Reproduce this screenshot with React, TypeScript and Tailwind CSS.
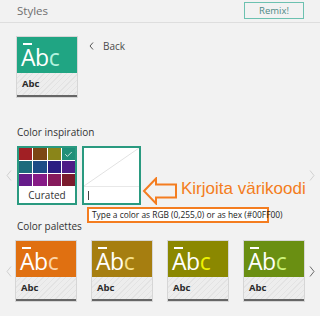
import { Check } from "lucide-react";

const swatches = [
	"bg-[#a11f24]",
	"bg-[#7c4614]",
	"bg-[#8a8519]",
	"bg-[#1f8f78]",
	"bg-[#1d6b7c]",
	"bg-[#1c4b86]",
	"bg-[#2b1d82]",
	"bg-[#4d1c86]",
	"bg-[#661c8a]",
	"bg-[#861a86]",
	"bg-[#861a5c]",
	"bg-[#7a1a2c]",
];

const palettes = [
	{ bg: "bg-[#e07011]", accent: "text-[#fbd4a8]" },
	{ bg: "bg-[#a67e10]", accent: "text-[#f6e08a]" },
	{ bg: "bg-[#8b8800]", accent: "text-[#eef200]" },
	{ bg: "bg-[#6a8f12]", accent: "text-[#cdf27a]" },
];

function StyleCard({ bg, accent }: { bg: string; accent: string }) {
	return (
		<div className="w-[60px] h-[60px] flex flex-col shrink-0 shadow-[0_0_0_1px_#d6d6d6]">
			<div className={`h-[36px] relative overflow-hidden ${bg}`}>
				<div className="absolute left-[6px] top-[6px] w-[9px] h-[1.5px] bg-white" />
				<div className="absolute left-[4px] top-[9px] text-[23px] leading-none text-white tracking-[-0.5px]">
					Ab<span className={accent}>c</span>
				</div>
			</div>
			<div className="flex-1 flex items-center pl-[5px] bg-[repeating-linear-gradient(135deg,#ededed_0px,#ededed_3px,#e3e3e3_3px,#e3e3e3_4px)]">
				<span className="text-[9.5px] font-bold text-[#2a2a2a] leading-none">Abc</span>
			</div>
			<div className="h-[2px] bg-[#666]" />
		</div>
	);
}

function Chevron({ dir, dark }: { dir: "left" | "right"; dark?: boolean }) {
	return (
		<svg width="6" height="11" viewBox="0 0 6 11" className="shrink-0">
			<polyline
				points={dir === "left" ? "5,0.5 1,5.5 5,10.5" : "1,0.5 5,5.5 1,10.5"}
				fill="none"
				stroke={dark ? "#6a6a6a" : "#d0d0d0"}
				strokeWidth="1"
			/>
		</svg>
	);
}

export default function App() {
	return (
		<div className="w-[320px] h-[316px] bg-[#f2f2f2] relative overflow-hidden font-['Open_Sans',sans-serif]">
			<div className="h-[23px] border-b border-[#dedede] flex items-center justify-between pl-[17px] pr-[16px]">
				<span className="text-[11.5px] text-[#6f6f6f]">Styles</span>
				<button className="w-[60px] h-[17px] border-[1.5px] border-[#6cc1b0] text-[9.5px] text-[#4f8a86] leading-none mt-[-1px]">
					Remix!
				</button>
			</div>

			<div className="flex pt-[14px] pl-[17px]">
				<StyleCard bg="bg-[#20a583]" accent="text-[#b4f2df]" />
				<div className="flex items-center gap-[9px] ml-[12px] h-[16px] mt-[1px]">
					<svg width="5" height="8" viewBox="0 0 5 8">
						<polyline points="4,0.5 1,4 4,7.5" fill="none" stroke="#555" strokeWidth="1" />
					</svg>
					<span className="text-[10px] text-[#4a4a4a]">Back</span>
				</div>
			</div>

			<div className="mt-[28px] pl-[17px] text-[10px] text-[#333] leading-[14px]">Color inspiration</div>

			<div className="flex items-center mt-[7px]">
				<div className="w-[17px] flex justify-center pl-[1px]">
					<Chevron dir="left" />
				</div>
				<div className="flex gap-[5px]">
					<div className="w-[60px] h-[59px] border-2 border-[#2a9a80] flex flex-col bg-white">
						<div className="grid grid-cols-4 gap-px bg-white">
							{swatches.map((c, i) => (
								<div key={i} className={`h-[12px] flex items-center justify-center ${c}`}>
									{i === 3 && <Check size={9} color="white" strokeWidth={2} />}
								</div>
							))}
						</div>
						<div className="flex-1 flex items-center justify-center text-[10px] text-[#333] leading-none">
							Curated
						</div>
					</div>
					<div className="w-[59px] h-[59px] border-2 border-[#2a9a80] flex flex-col bg-white">
						<svg width="55" height="38" viewBox="0 0 55 38" className="block">
							<line x1="0" y1="38" x2="55" y2="0" stroke="#e2e2e2" strokeWidth="1" />
						</svg>
						<div className="h-px bg-[#e8e8e8]" />
						<div className="flex-1 flex items-center pl-[4px]">
							<div className="w-px h-[9px] bg-[#444]" />
						</div>
					</div>
				</div>
				<div className="flex-1" />
				<div className="w-[17px] flex justify-center">
					<Chevron dir="right" />
				</div>
			</div>

			<div className="mt-[14px] pl-[17px] text-[10px] text-[#333] leading-[14px]">Color palettes</div>

			<div className="flex items-center mt-[8px]">
				<div className="w-[17px] flex justify-center pl-[1px]">
					<Chevron dir="left" />
				</div>
				<div className="flex gap-[16px]">
					{palettes.map((p, i) => (
						<StyleCard key={i} bg={p.bg} accent={p.accent} />
					))}
				</div>
				<div className="flex-1" />
				<div className="w-[17px] flex justify-center">
					<Chevron dir="right" dark />
				</div>
			</div>

			{/* annotation overlay */}
			<svg width="36" height="28" viewBox="0 0 36 28" className="absolute left-[142px] top-[177px]">
				<polygon
					points="2,14 14,1.5 14,7.5 34,7.5 34,20.5 14,20.5 14,26.5"
					fill="none"
					stroke="#f47d20"
					strokeWidth="2"
					strokeLinejoin="miter"
				/>
			</svg>
			<div className="absolute left-[181px] top-[178px] text-[17px] leading-[22px] text-[#f47d20] font-['Liberation_Sans',sans-serif]">
				Kirjoita värikoodi
			</div>
			<div className="absolute left-[87px] top-[207px] w-[182px] h-[16px] border-2 border-[#f47d20] bg-white flex items-center pl-[3px]">
				<span className="text-[8.4px] text-[#222] leading-none whitespace-nowrap">
					Type a color as RGB (0,255,0) or as hex (#00FF00)
				</span>
			</div>
		</div>
	);
}
